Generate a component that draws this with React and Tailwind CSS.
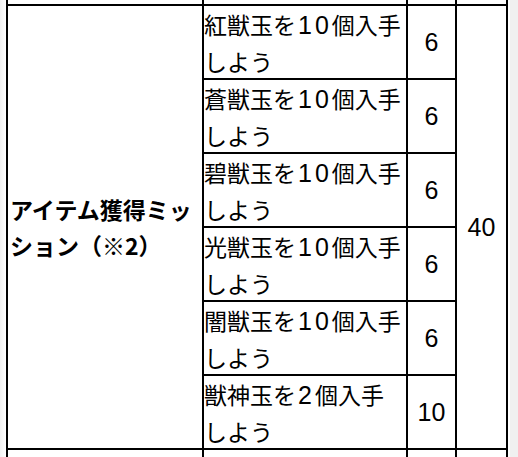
const missions = [
  { gem: '紅獣玉', count: '10', point: '6' },
  { gem: '蒼獣玉', count: '10', point: '6' },
  { gem: '碧獣玉', count: '10', point: '6' },
  { gem: '光獣玉', count: '10', point: '6' },
  { gem: '闇獣玉', count: '10', point: '6' },
  { gem: '獣神玉', count: '2', point: '10' },
];

const Cell = ({ className = '', children }) => (
  <div className={`bg-white text-black ${className}`}>{children}</div>
);

// digits in the picture are wider and taller than the kana around them
const Num = ({ children, className = '' }) => (
  <span className={`font-['Liberation_Sans',sans-serif] text-[25px] ${className}`}>{children}</span>
);

export default function App() {
  return (
    <div
      className="flex h-[457px] w-[518px] overflow-hidden bg-white"
      style={{ fontFamily: '"Noto Sans CJK JP", "Noto Sans", sans-serif' }}
    >
      <div className="w-[6px] shrink-0 bg-gradient-to-r from-[#f1f1f1] to-white" />

      <div className="grid shrink-0 grid-cols-[194px_202px_47px_49px] grid-rows-[4px_repeat(6,72px)_40px] gap-[2px] bg-black px-[2px] text-[23px] leading-[36px]">
        {/* previous row, only its bottom edge is visible */}
        <Cell />
        <Cell />
        <Cell />
        <Cell />

        <Cell className="col-start-1 row-span-6 row-start-2 flex items-center pl-[2px] font-bold">
          <div>
            アイテム獲得ミッ
            <br />
            ション（※2）
          </div>
        </Cell>

        {missions.map((m, i) => (
          <div key={m.gem} className="contents">
            <Cell className="col-start-2">
              {m.gem}を<Num className="tracking-[3px] pl-[2px]">{m.count}</Num>個入手
              <br />
              しよう
            </Cell>
            <Cell className="col-start-3 flex items-center justify-center">
              <Num>{m.point}</Num>
            </Cell>
            {i === 0 && (
              <Cell className="col-start-4 row-span-6 row-start-2 flex items-center justify-center">
                <Num>40</Num>
              </Cell>
            )}
          </div>
        ))}

        {/* next row, only its top is visible */}
        <Cell />
        <Cell />
        <Cell />
        <Cell />
      </div>

      <div className="w-[2px] shrink-0 bg-white" />
      <div className="flex-1 bg-[#f0f0f0]" />
    </div>
  );
}
